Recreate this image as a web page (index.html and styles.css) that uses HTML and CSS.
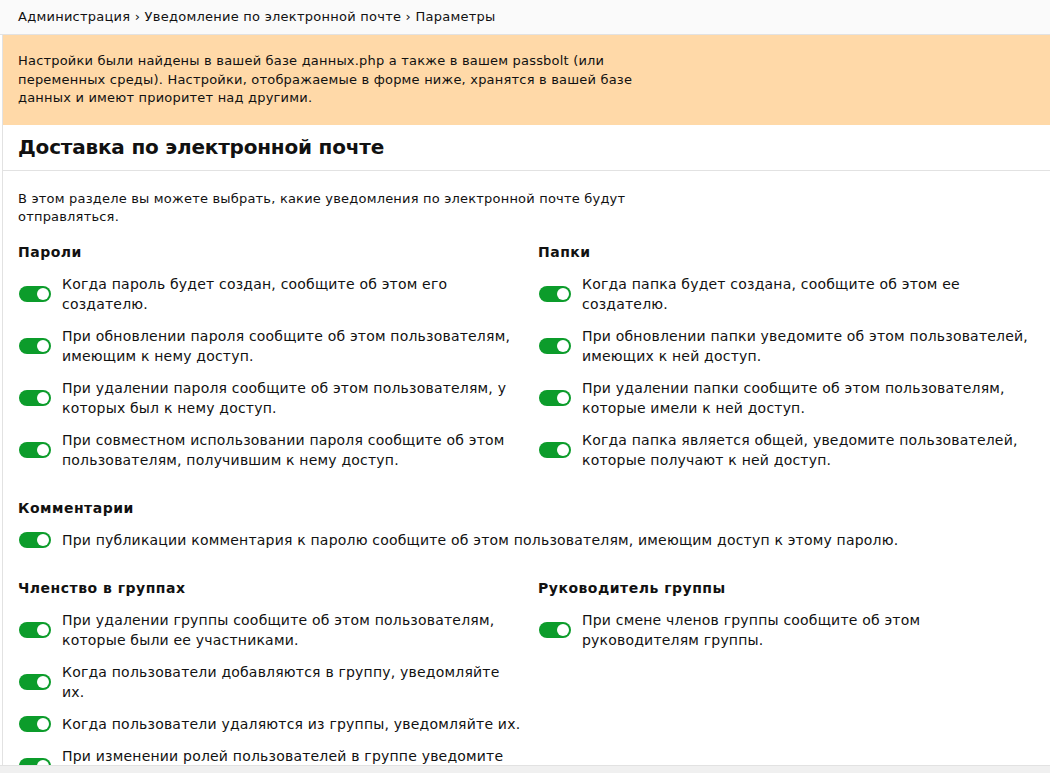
FILE: index.html
```html
<!DOCTYPE html>
<html lang="ru">
<head>
<meta charset="utf-8">
<title>Доставка по электронной почте</title>
<link rel="stylesheet" href="styles.css">
</head>
<body>
<div class="page">
  <div class="breadcrumb">Администрация › Уведомление по электронной почте › Параметры</div>
  <div class="main">
    <div class="warning"><p class="warning-text">Настройки были найдены в вашей базе данных.php а также в вашем passbolt (или переменных среды). Настройки, отображаемые в форме ниже, хранятся в вашей базе данных и имеют приоритет над другими.</p></div>
    <h1 class="title">Доставка по электронной почте</h1>
    <div class="content">
      <p class="desc">В этом разделе вы можете выбрать, какие уведомления по электронной почте будут отправляться.</p>
      <div class="grid">
        <section class="group">
          <h3>Пароли</h3>
          <div class="item"><span class="toggle"></span><span class="label">Когда пароль будет создан, сообщите об этом его создателю.</span></div>
          <div class="item"><span class="toggle"></span><span class="label">При обновлении пароля сообщите об этом пользователям, имеющим к нему доступ.</span></div>
          <div class="item"><span class="toggle"></span><span class="label">При удалении пароля сообщите об этом пользователям, у которых был к нему доступ.</span></div>
          <div class="item"><span class="toggle"></span><span class="label">При совместном использовании пароля сообщите об этом пользователям, получившим к нему доступ.</span></div>
        </section>
        <section class="group">
          <h3>Папки</h3>
          <div class="item"><span class="toggle"></span><span class="label">Когда папка будет создана, сообщите об этом ее создателю.</span></div>
          <div class="item"><span class="toggle"></span><span class="label">При обновлении папки уведомите об этом пользователей, имеющих к ней доступ.</span></div>
          <div class="item"><span class="toggle"></span><span class="label">При удалении папки сообщите об этом пользователям, которые имели к ней доступ.</span></div>
          <div class="item"><span class="toggle"></span><span class="label">Когда папка является общей, уведомите пользователей, которые получают к ней доступ.</span></div>
        </section>
        <section class="group wide">
          <h3>Комментарии</h3>
          <div class="item"><span class="toggle"></span><span class="label">При публикации комментария к паролю сообщите об этом пользователям, имеющим доступ к этому паролю.</span></div>
        </section>
        <section class="group">
          <h3>Членство в группах</h3>
          <div class="item"><span class="toggle"></span><span class="label">При удалении группы сообщите об этом пользователям, которые были ее участниками.</span></div>
          <div class="item"><span class="toggle"></span><span class="label">Когда пользователи добавляются в группу, уведомляйте их.</span></div>
          <div class="item"><span class="toggle"></span><span class="label">Когда пользователи удаляются из группы, уведомляйте их.</span></div>
          <div class="item"><span class="toggle"></span><span class="label">При изменении ролей пользователей в группе уведомите пользователей об этом.</span></div>
        </section>
        <section class="group">
          <h3>Руководитель группы</h3>
          <div class="item"><span class="toggle"></span><span class="label">При смене членов группы сообщите об этом руководителям группы.</span></div>
        </section>
      </div>
    </div>
  </div>
  <div class="footer"></div>
</div>
</body>
</html>
```
FILE: styles.css
```css
html, body {
  margin: 0;
  padding: 0;
  background: #fff;
}
body {
  font-family: "DejaVu Sans", Verdana, sans-serif;
  color: #111;
}
.page {
  height: 773px;
  display: flex;
  flex-direction: column;
  overflow: hidden;
}
.breadcrumb {
  flex: none;
  height: 34px;
  line-height: 33px;
  background: #fafafa;
  border-bottom: 1px solid #e2e2e2;
  padding-left: 18px;
  font-size: 13px;
  letter-spacing: 0.25px;
  color: #111;
}
.main {
  flex: 1;
  overflow: hidden;
  margin-left: 2px;
  border-left: 1px solid #e2e2e2;
}
.warning {
  background: #ffd9a8;
  padding: 17px 15px 17px;
}
.warning-text {
  margin: 0;
  max-width: 640px;
  font-size: 13px;
  line-height: 18.5px;
  letter-spacing: 0.2px;
}
.title {
  margin: 0;
  height: 45px;
  line-height: 45px;
  padding-left: 15px;
  font-size: 20px;
  letter-spacing: -0.2px;
  font-weight: bold;
  border-bottom: 1px solid #e2e2e2;
}
.content {
  padding: 0 16px 0 15px;
}
.desc {
  margin: 19px 0 0;
  max-width: 630px;
  font-size: 13px;
  line-height: 18px;
  letter-spacing: 0.2px;
}
.grid {
  display: grid;
  grid-template-columns: 520px minmax(0, 1fr);
}
.group {
  padding-top: 16px;
  min-width: 0;
}
.group.wide {
  grid-column: 1 / -1;
}
.group h3 {
  margin: 0 0 12px;
  font-size: 14px;
  line-height: 20px;
  letter-spacing: 0.5px;
  font-weight: bold;
}
.item {
  display: flex;
  align-items: center;
  gap: 11px;
  margin-bottom: 12px;
  padding-left: 1px;
}
.label {
  font-size: 14px;
  line-height: 20px;
  letter-spacing: 0.2px;
  max-width: 460px;
  min-width: 0;
}
.wide .label {
  max-width: none;
}
.toggle {
  flex: none;
  width: 32px;
  height: 16px;
  border-radius: 8px;
  background: #0c9c2b;
  position: relative;
}
.toggle::after {
  content: "";
  position: absolute;
  right: 2px;
  top: 2px;
  width: 12px;
  height: 12px;
  border-radius: 50%;
  background: #fff;
}
.footer {
  flex: none;
  height: 7px;
  background: #f0f0f0;
  border-top: 1px solid #e2e2e2;
}
```
